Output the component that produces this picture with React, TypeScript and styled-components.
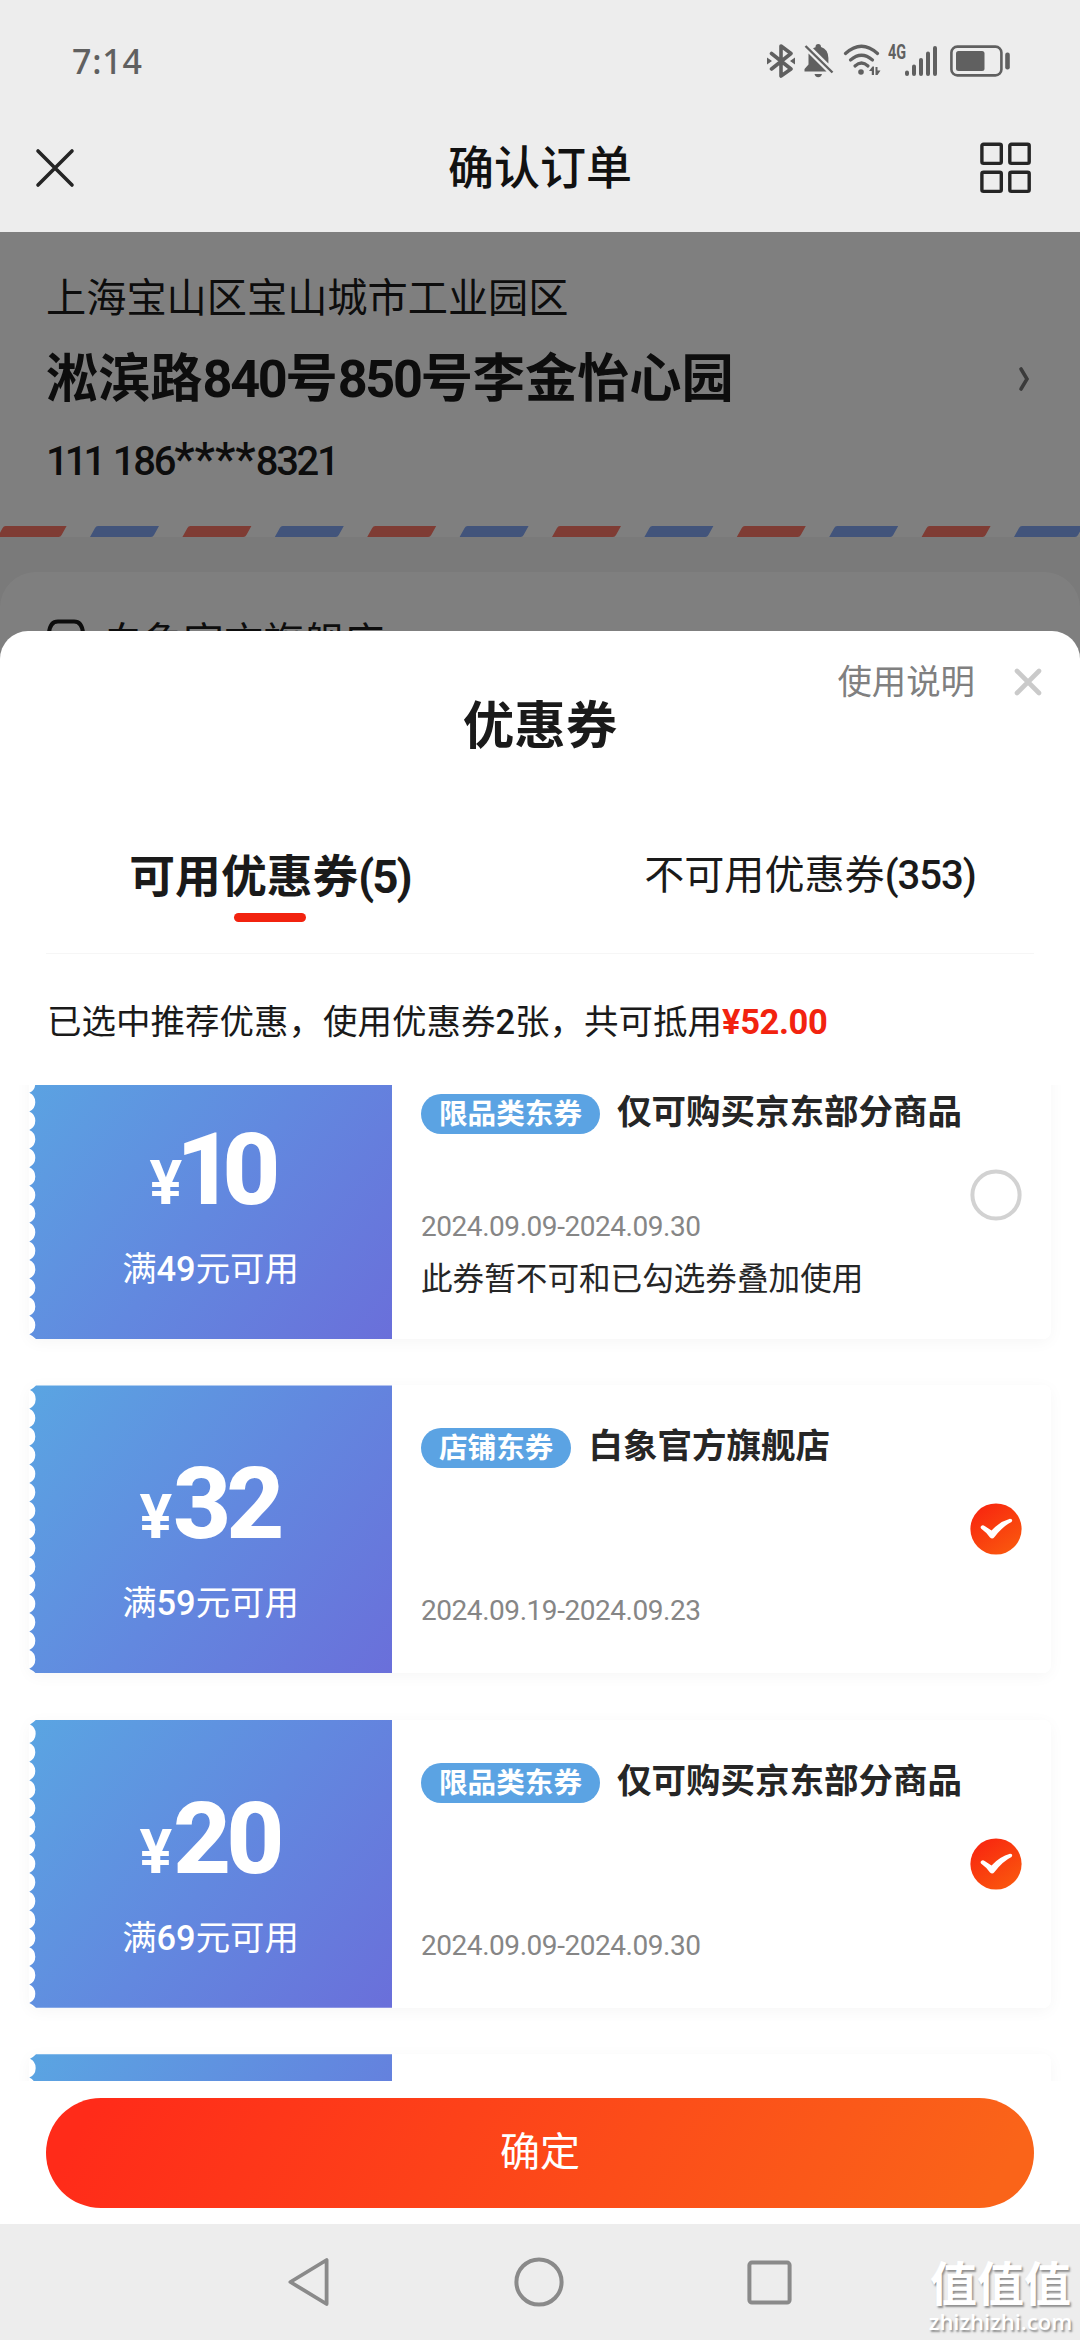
import React from "react";
import styled, { createGlobalStyle, css } from "styled-components";

const GlobalStyle = createGlobalStyle`
  *, *::before, *::after { box-sizing: border-box; }
  body { margin: 0; background: #fff; }
`;

const Screen = styled.div`
  width: 1080px;
  height: 2340px;
  display: flex;
  flex-direction: column;
  overflow: hidden;
  background: #fff;
  color: #1a1a1a;
  font-family: Roboto, "Noto Sans CJK SC", sans-serif;
  white-space: nowrap;
  svg { display: block; flex: none; }
`;

/* ---------- top chrome ---------- */

const TopChrome = styled.header`
  height: 232px;
  flex: none;
  background: #ededed;
  display: flex;
  flex-direction: column;
`;

const StatusBar = styled.div`
  height: 122px;
  padding: 0 70px 0 72px;
  display: flex;
  align-items: center;
  justify-content: space-between;
`;

const Clock = styled.span`
  font: 500 34px/40px "Noto Sans", sans-serif;
  letter-spacing: 0.8px;
  color: #606060;
`;

const StatusIcons = styled.div`
  display: flex;
  align-items: center;
`;

const NetworkTag = styled.span<{ $left: number }>`
  align-self: flex-start;
  margin-left: ${(p) => p.$left}px;
  width: 17px;
  font: 700 20px/16px Roboto, sans-serif;
  color: #606060;
  transform: scaleX(0.72);
  transform-origin: left;
`;

const IconSlot = styled.span<{ $left?: number }>`
  margin-left: ${(p) => p.$left ?? 0}px;
`;

const NavBar = styled.div`
  height: 92px;
  padding: 0 48px 0 35px;
  display: flex;
  align-items: center;
  justify-content: space-between;
`;

const NavTitle = styled.h1`
  margin: 0 0 0 25px;
  font-size: 46px;
  line-height: 60px;
  font-weight: 500;
  color: #111;
`;

const NavEnd = styled.div`
  justify-self: end;
`;

/* ---------- order page behind the sheet ---------- */

const Body = styled.main`
  position: relative;
  flex: 1;
  background: #f4f4f4;
  overflow: hidden;
`;

const Address = styled.section`
  height: 294px;
  padding: 37px 50px 0 46px;
  background: #fff;
  display: flex;
  justify-content: space-between;
  align-items: flex-start;
`;

const AddressLines = styled.div`
  display: flex;
  flex-direction: column;
`;

const District = styled.div`
  font-size: 40.2px;
  line-height: 60px;
`;

const Street = styled.div`
  margin-top: 16px;
  font-size: 52.2px;
  line-height: 70px;
  font-weight: 700;
`;

const Contact = styled.div`
  height: 50px;
  margin-top: 19px;
  font-size: 40px;
  line-height: 50px;
  font-weight: 500;
  letter-spacing: -2.3px;
  word-spacing: 3px;
`;

const Ones = styled.span`
  letter-spacing: -4px;
`;

const Digits = styled.span`
  letter-spacing: -2.3px;
`;

const Stars = styled.span`
  font-size: 46px;
  letter-spacing: 0;
`;

const ArrowSlot = styled.div`
  margin-top: 97px;
`;

const StoreCard = styled.section`
  margin-top: 35px;
  height: 300px;
  padding: 41px 47px;
  border-radius: 36px 36px 0 0;
  background: #fff;
  display: flex;
  gap: 18px;
  font-size: 40.2px;
  line-height: 60px;
`;

const StoreIcon = styled.span`
  padding-top: 6px;
`;

const Mask = styled.div`
  position: absolute;
  inset: 0;
  background: rgba(0, 0, 0, 0.5);
  display: flex;
  align-items: flex-end;
`;

/* ---------- coupon sheet ---------- */

const Sheet = styled.section`
  width: 100%;
  height: 1593px;
  border-radius: 28px 28px 0 0;
  background: #fff;
  display: flex;
  flex-direction: column;
  overflow: hidden;
`;

const SheetHead = styled.div`
  height: 160px;
  padding: 0 38px;
  flex: none;
  display: grid;
  grid-template-columns: 1fr auto 1fr;
  align-items: start;
`;

const SheetTitle = styled.h2`
  margin: 60px 0 0;
  grid-column: 2;
  font-size: 51.5px;
  line-height: 72px;
  font-weight: 700;
`;

const SheetActions = styled.div`
  margin-top: 31px;
  justify-self: end;
  display: flex;
  align-items: center;
  gap: 39px;
  font-size: 34.4px;
  line-height: 40px;
  color: #808080;
`;

const Tabs = styled.div`
  height: 162px;
  padding-top: 55px;
  flex: none;
  display: grid;
  grid-template-columns: 1fr 1fr;
`;

const Tab = styled.div<{ $active?: boolean }>`
  display: flex;
  flex-direction: column;
  align-items: center;
  line-height: 60px;
  font-size: 40.1px;
  ${(p) =>
    p.$active &&
    css`
      padding-top: 2px;
      font-size: 45.8px;
      font-weight: 700;
      &::after {
        content: "";
        width: 72px;
        height: 9px;
        margin-top: 5px;
        border-radius: 5px;
        background: #f2230f;
      }
    `}
`;

const TabCount = styled.span<{ $active?: boolean }>`
  font-weight: ${(p) => (p.$active ? 700 : 500)};
  letter-spacing: ${(p) => (p.$active ? -2 : -1)}px;
`;

const Summary = styled.div`
  height: 132px;
  margin: 0 46px;
  padding: 48px 1px 0;
  flex: none;
  border-top: 1px solid #f6f6f6;
  font-size: 34.5px;
  line-height: 40px;
`;

const Strong = styled.span`
  font-weight: 500;
`;

const Saving = styled.span`
  font-weight: 700;
  letter-spacing: -0.4px;
  color: #f2230f;
`;

const List = styled.div`
  flex: 1;
  min-height: 0;
  padding: 0 29px;
  overflow: hidden;
`;

const ListTrack = styled.div`
  margin-top: -34px;
  display: flex;
  flex-direction: column;
  gap: 46.4px;
`;

const Coupon = styled.article`
  height: 288px;
  flex: none;
  display: flex;
  border-radius: 8px;
  box-shadow: 0 3px 16px rgba(0, 0, 0, 0.04);
`;

/* Outline of the ticket stub: 15 round bites between two rounded corners. */
const stubPath = (() => {
  let d = "M363 0 H7 Q4 3 1 4.7";
  for (let i = 1; i <= 15; i++) d += ` A10.2 10.2 0 0 1 0.3 ${(4.7 + i * 18.573).toFixed(2)}`;
  return `${d} Q4 285 7 288 H363 Z`;
})();

const Stub = styled.div`
  width: 363px;
  padding-top: 60px;
  display: flex;
  flex-direction: column;
  align-items: center;
  color: #fff;
  background: linear-gradient(128deg, #5aa5e2 0%, #6288df 52%, #6a6fda 100%);
  clip-path: path("${stubPath}");
`;

const Price = styled.div`
  display: flex;
  align-items: baseline;
  gap: 1px;
  font-weight: 800;
  font-size: 101px;
  line-height: 118px;
`;

const Yen = styled.span`
  font-size: 61px;
  font-weight: 700;
`;

const Amount = styled.span<{ $narrow?: boolean }>`
  margin-left: ${(p) => (p.$narrow ? -7 : 0)}px;
  margin-right: ${(p) => (p.$narrow ? 3 : 2)}px;
  letter-spacing: ${(p) => (p.$narrow ? -12 : -5)}px;
`;

const Threshold = styled.div`
  margin-top: 5px;
  font-size: 34.4px;
  line-height: 44px;
`;

const Details = styled.div`
  flex: 1;
  padding: 34px 29px 0;
  display: flex;
  background: #fff;
  border-radius: 0 8px 8px 0;
`;

const Info = styled.div`
  flex: 1;
  height: 210px;
  display: flex;
  flex-direction: column;
`;

const Heading = styled.div`
  display: flex;
  gap: 17px;
  line-height: 54px;
`;

const Badge = styled.span`
  height: 40px;
  margin-top: 9px;
  padding: 0 18px;
  border-radius: 20px;
  background: #5ba3e3;
  color: #fff;
  font-size: 28.6px;
  line-height: 41px;
  font-weight: 700;
`;

const Scope = styled.span`
  font-size: 34.5px;
  font-weight: 700;
  color: #262626;
`;

const Dates = styled.div<{ $raised?: boolean }>`
  margin-top: ${(p) => (p.$raised ? 72 : 122)}px;
  font-size: 28px;
  line-height: 32px;
  letter-spacing: -0.45px;
  color: #868686;
`;

const Notice = styled.div`
  margin-top: 15px;
  font-size: 31.6px;
  line-height: 44px;
  color: #262626;
`;

const Pick = styled.div`
  margin-top: 84px;
  width: 52px;
  height: 52px;
`;

const Footer = styled.div`
  height: 143px;
  padding: 17px 46px 0;
  flex: none;
`;

const Confirm = styled.button`
  width: 100%;
  height: 110px;
  padding: 0;
  border: 0;
  border-radius: 55px;
  background: linear-gradient(120deg, #ff2b19 5%, #fa6419 95%);
  color: #fff;
  font: 400 40px/110px Roboto, "Noto Sans CJK SC", sans-serif;
`;

/* ---------- system navigation ---------- */

const SystemNav = styled.footer`
  position: relative;
  height: 116px;
  flex: none;
  padding: 0 288px;
  background: #ededed;
  display: flex;
  align-items: center;
  justify-content: space-between;
`;

const Watermark = styled.div`
  position: absolute;
  right: 8px;
  bottom: 7px;
  width: 143px;
  display: flex;
  flex-direction: column;
  align-items: center;
  color: #fff;
  text-shadow: 1.5px 2px 2px rgba(0, 0, 0, 0.4);
`;

const WatermarkName = styled.span`
  font: 700 47px/50px Roboto, "Noto Sans CJK SC", sans-serif;
`;

const WatermarkSite = styled.span`
  font: 600 22px/23px "Open Sans", sans-serif;
`;

/* ---------- icons ---------- */

const BluetoothIcon = () => (
  <svg width="28" height="34" viewBox="0 0 28 34" fill="none" stroke="#606060" strokeWidth="3.6" strokeLinejoin="round" strokeLinecap="round">
    <path d="M4.5 9.5 L24 25 L14 32 V2 L24 9.5 L4.5 25" />
    <path d="M0 13.5 L5 17 L0 20.5 Z M28 13.5 L23 17 L28 20.5 Z" fill="#606060" stroke="none" />
  </svg>
);

const BellOffIcon = () => (
  <svg width="30" height="34" viewBox="0 0 30 34" fill="#606060">
    <path d="M11.5 3.2 Q11.5 0 14.2 0 Q17 0 17 3 Q24 5 24.4 14 V19.5 L9 4.2 Z" />
    <path d="M4.5 9.5 L22.5 27.5 H0.5 V25 L4.5 20.5 Z" />
    <path d="M10.5 30 H18 Q17 33.2 14.2 33.2 Q11.5 33.2 10.5 30 Z" />
    <path d="M1.5 2 L28.5 28.5" stroke="#606060" strokeWidth="2.4" />
  </svg>
);

const WifiIcon = () => (
  <svg width="38" height="34" viewBox="0 0 38 34" fill="none" stroke="#606060" strokeWidth="3.2" strokeLinecap="round">
    <path d="M2.5 9.5 Q18.5 -5 34.5 9.5" />
    <path d="M7.5 16 Q18.5 6.5 29.5 16" />
    <path d="M12 22 Q18.5 16 25 22" />
    <circle cx="18" cy="28" r="2.8" fill="#606060" stroke="none" />
    <path d="M26 27 L29.5 22.5 H31 V31 H28.8 V27 Z M32.5 23 H34.5 V26.5 H37.5 L34.5 31 H32.5 Z" fill="#606060" stroke="none" />
  </svg>
);

const SignalIcon = () => (
  <svg width="33" height="32" viewBox="0 0 33 32" stroke="#606060" strokeWidth="4" strokeLinecap="round">
    <path d="M2 27.5 V29 M9 21.5 V29 M16 15 V29 M23 8.5 V29 M30 3 V29" />
  </svg>
);

const BatteryIcon = () => (
  <svg width="60" height="32" viewBox="0 0 60 32">
    <rect x="1.4" y="1.6" width="50" height="28.8" rx="6" fill="none" stroke="#606060" strokeWidth="2.6" />
    <rect x="6" y="6" width="28.5" height="20" rx="2.5" fill="#606060" />
    <rect x="55.2" y="7.5" width="4.6" height="17" rx="2.2" fill="#606060" />
  </svg>
);

const CrossIcon = ({ size, width, color }: { size: number; width: number; color: string }) => (
  <svg width={size} height={size} viewBox={`0 0 ${size} ${size}`} stroke={color} strokeWidth={width} strokeLinecap="round">
    <path d={`M3 3 L${size - 3} ${size - 3} M${size - 3} 3 L3 ${size - 3}`} />
  </svg>
);

const GridIcon = () => (
  <svg width="52" height="52" viewBox="0 0 52 52" fill="none" stroke="#252525" strokeWidth="3.4">
    <rect x="1.9" y="2.2" width="19.4" height="19.2" rx="1.6" />
    <rect x="29.8" y="2.2" width="19.4" height="19.2" rx="1.6" />
    <rect x="1.9" y="30.2" width="19.4" height="19.2" rx="1.6" />
    <rect x="29.8" y="30.2" width="19.4" height="19.2" rx="1.6" />
  </svg>
);

const ArrowIcon = () => (
  <svg width="12" height="26" viewBox="0 0 12 26" fill="none" stroke="#777" strokeWidth="3.6" strokeLinecap="round">
    <path d="M3 3 L9 13 L3 23" />
  </svg>
);

const ShopIcon = () => (
  <svg width="38" height="42" viewBox="0 0 38 42" fill="none" stroke="#1a1a1a" strokeWidth="4">
    <path d="M2 18 V14 Q3 2.6 11 2.6 H27 Q35 2.6 36 14 V40 H2 Z" />
  </svg>
);

const AirmailStripe = () => (
  <svg width="1080" height="11" viewBox="0 0 1080 11">
    <rect width="1080" height="11" fill="#fff" />
    {Array.from({ length: 12 }, (_, i) => (
      <path
        key={i}
        transform={`translate(${-2.4 + i * 92.4} 0)`}
        d="M0 11 L5 2 Q6 0 8 0 H69 L64 9 Q63 11 61 11 Z"
        fill={i % 2 ? "#84a8f6" : "#ff7869"}
      />
    ))}
  </svg>
);

const CheckedIcon = () => (
  <svg width="52" height="52" viewBox="0 0 52 52">
    <defs>
      <linearGradient id="picked" x1="0" y1="0" x2="0.7" y2="1">
        <stop offset="0" stopColor="#f8200f" />
        <stop offset="1" stopColor="#fa560e" />
      </linearGradient>
    </defs>
    <circle cx="26" cy="26" r="25.6" fill="url(#picked)" />
    <path d="M10.5 24 Q12 21 15 23.2 L21.5 27.5 Q30 18.5 40 15.8 Q43.5 16 41.5 19 Q33 23 24.5 34 Q22.3 36.8 20 34.5 Q16 29 11 25.5 Z" fill="#fff" />
  </svg>
);

const UncheckedIcon = () => (
  <svg width="52" height="52" viewBox="0 0 52 52">
    <circle cx="26" cy="26" r="23.6" fill="#fff" stroke="#d2d2d2" strokeWidth="4" />
  </svg>
);

const BackIcon = () => (
  <svg width="42" height="50" viewBox="0 0 42 50" fill="none" stroke="#8a8a8a" strokeWidth="3.8" strokeLinejoin="round">
    <path d="M2.4 25 L38.6 3 V47 Z" />
  </svg>
);

const HomeIcon = () => (
  <svg width="50" height="50" viewBox="0 0 50 50" fill="none" stroke="#8a8a8a" strokeWidth="4">
    <circle cx="25" cy="25" r="22.6" />
  </svg>
);

const RecentIcon = () => (
  <svg width="45" height="45" viewBox="0 0 45 45" fill="none" stroke="#8a8a8a" strokeWidth="4">
    <rect x="2.4" y="2.6" width="40.2" height="40" rx="2.5" />
  </svg>
);

/* ---------- data ---------- */

type CouponData = {
  amount: number;
  minimum: number;
  badge: string;
  scope: string;
  dates: string;
  notice?: string;
  picked?: boolean;
};

const coupons: CouponData[] = [
  { amount: 10, minimum: 49, badge: "限品类东券", scope: "仅可购买京东部分商品", dates: "2024.09.09-2024.09.30", notice: "此券暂不可和已勾选券叠加使用" },
  { amount: 32, minimum: 59, badge: "店铺东券", scope: "白象官方旗舰店", dates: "2024.09.19-2024.09.23", picked: true },
  { amount: 20, minimum: 69, badge: "限品类东券", scope: "仅可购买京东部分商品", dates: "2024.09.09-2024.09.30", picked: true },
];

const CouponCard = ({ coupon }: { coupon: CouponData }) => (
  <Coupon>
    <Stub>
      <Price>
        <Yen>¥</Yen>
        <Amount $narrow={String(coupon.amount).startsWith("1")}>{coupon.amount}</Amount>
      </Price>
      <Threshold>
        满<Strong>{coupon.minimum}</Strong>元可用
      </Threshold>
    </Stub>
    <Details>
      <Info>
        <Heading>
          <Badge>{coupon.badge}</Badge>
          <Scope>{coupon.scope}</Scope>
        </Heading>
        <Dates $raised={!!coupon.notice}>{coupon.dates}</Dates>
        {coupon.notice && <Notice>{coupon.notice}</Notice>}
      </Info>
      <Pick>{coupon.picked ? <CheckedIcon /> : <UncheckedIcon />}</Pick>
    </Details>
  </Coupon>
);

export default function App() {
  return (
    <Screen>
      <GlobalStyle />
      <TopChrome>
        <StatusBar>
          <Clock>7:14</Clock>
          <StatusIcons>
            <BluetoothIcon />
            <IconSlot $left={9}><BellOffIcon /></IconSlot>
            <IconSlot $left={9}><WifiIcon /></IconSlot>
            <NetworkTag $left={7}>4G</NetworkTag>
            <IconSlot><SignalIcon /></IconSlot>
            <IconSlot $left={12}><BatteryIcon /></IconSlot>
          </StatusIcons>
        </StatusBar>
        <NavBar>
          <CrossIcon size={40} width={3.6} color="#252525" />
          <NavTitle>确认订单</NavTitle>
          <NavEnd><GridIcon /></NavEnd>
        </NavBar>
      </TopChrome>

      <Body>
        <Address>
          <AddressLines>
            <District>上海宝山区宝山城市工业园区</District>
            <Street>
              淞滨路<Digits>840</Digits>号<Digits>850</Digits>号李金怡心园
            </Street>
            <Contact><Ones>111</Ones> 186<Stars>****</Stars>8321</Contact>
          </AddressLines>
          <ArrowSlot><ArrowIcon /></ArrowSlot>
        </Address>
        <AirmailStripe />
        <StoreCard>
          <StoreIcon><ShopIcon /></StoreIcon>
          白象官方旗舰店
        </StoreCard>

        <Mask>
          <Sheet>
            <SheetHead>
              <SheetTitle>优惠券</SheetTitle>
              <SheetActions>
                使用说明
                <CrossIcon size={28} width={4.6} color="#cacaca" />
              </SheetActions>
            </SheetHead>
            <Tabs>
              <Tab $active>
                <span>可用优惠券<TabCount $active>(5)</TabCount></span>
              </Tab>
              <Tab>
                <span>不可用优惠券<TabCount>(353)</TabCount></span>
              </Tab>
            </Tabs>
            <Summary>
              已选中推荐优惠，使用优惠券<Strong>2</Strong>张，共可抵用<Saving>¥52.00</Saving>
            </Summary>
            <List>
              <ListTrack>
                {coupons.map((coupon, i) => (
                  <CouponCard key={i} coupon={coupon} />
                ))}
                <Coupon>
                  <Stub />
                  <Details />
                </Coupon>
              </ListTrack>
            </List>
            <Footer>
              <Confirm>确定</Confirm>
            </Footer>
          </Sheet>
        </Mask>
      </Body>

      <SystemNav>
        <BackIcon />
        <HomeIcon />
        <RecentIcon />
        <Watermark>
          <WatermarkName>值值值</WatermarkName>
          <WatermarkSite>zhizhizhi.com</WatermarkSite>
        </Watermark>
      </SystemNav>
    </Screen>
  );
}
